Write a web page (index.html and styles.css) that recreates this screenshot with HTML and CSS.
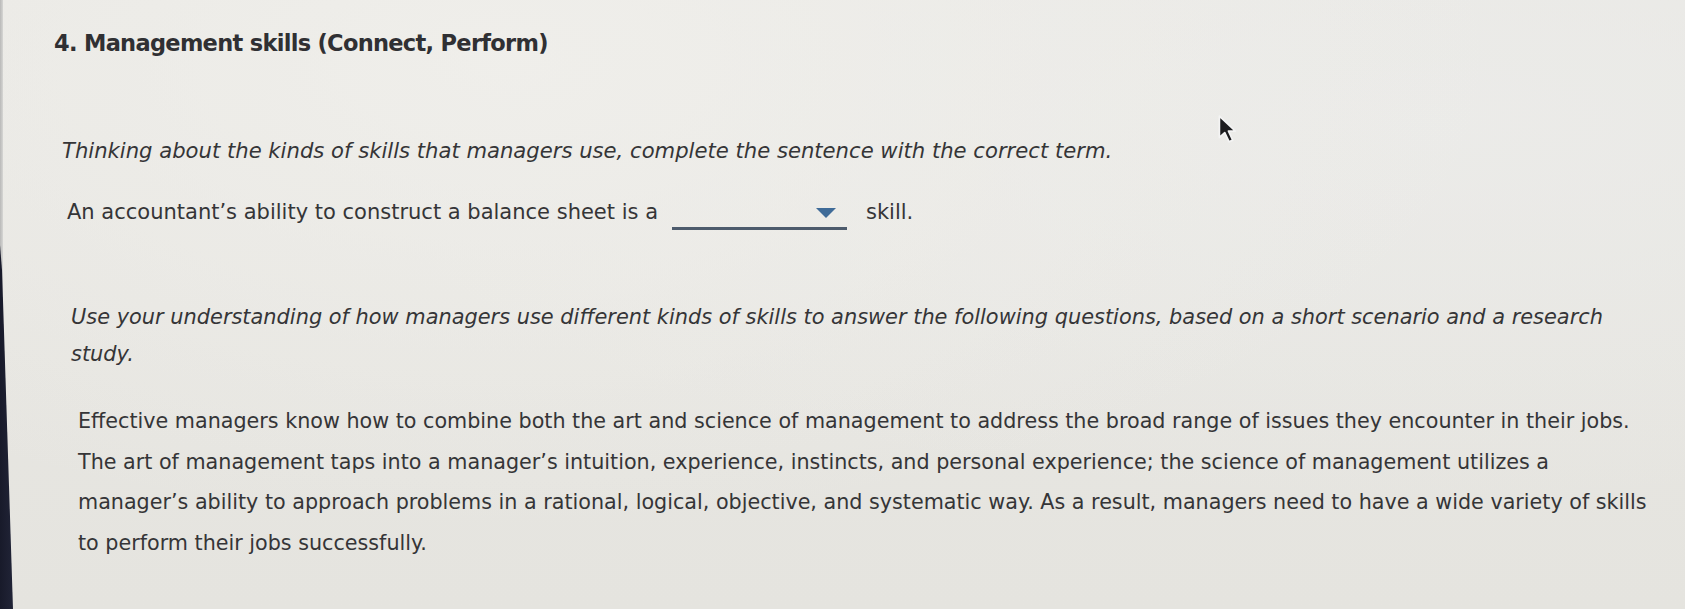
FILE: index.html
```
<!DOCTYPE html>
<html lang="en">
<head>
<meta charset="utf-8">
<title>Management skills</title>
<link rel="stylesheet" href="styles.css">
</head>
<body>
<div class="screen">
  <div class="edge-light"></div>
  <div class="edge"></div>
  <main class="content">
    <h1 class="title">4. Management skills (Connect, Perform)</h1>
    <p class="intro">Thinking about the kinds of skills that managers use, complete the sentence with the correct term.</p>
    <div class="question">
      <span class="q-text">An accountant’s ability to construct a balance sheet is a</span>
      <span class="select"><span class="caret"></span></span>
      <span class="q-end">skill.</span>
    </div>
    <p class="instructions">Use your understanding of how managers use different kinds of skills to answer the following questions, based on a short scenario and a research<br>study.</p>
    <p class="scenario">Effective managers know how to combine both the art and science of management to address the broad range of issues they encounter in their jobs.<br>The art of management taps into a manager’s intuition, experience, instincts, and personal experience; the science of management utilizes a<br>manager’s ability to approach problems in a rational, logical, objective, and systematic way. As a result, managers need to have a wide variety of skills<br>to perform their jobs successfully.</p>
  </main>
  <svg class="cursor" width="26" height="32" viewBox="0 0 24 30" aria-hidden="true">
    <path d="M3 2 L3 22 L8 17.5 L12 26 L15.5 24.5 L11.5 16 L18 16 Z" fill="#1c1c1e" stroke="#f4f4f4" stroke-width="1.6" stroke-linejoin="round"/>
  </svg>
</div>
</body>
</html>
```
FILE: styles.css
```
html, body {
  margin: 0;
  padding: 0;
}
body {
  width: 1685px;
  height: 609px;
  overflow: hidden;
  background: #e7e6e2;
}
.screen {
  position: relative;
  width: 1685px;
  height: 609px;
  background:
    radial-gradient(ellipse at 30% 10%, rgba(240,239,235,0.9), rgba(240,239,235,0) 60%),
    radial-gradient(ellipse at 85% 20%, rgba(236,236,234,0.8), rgba(236,236,234,0) 55%),
    linear-gradient(180deg, #e9e8e4 0%, #e5e4df 100%);
  font-family: "DejaVu Sans", Verdana, sans-serif;
  color: #353537;
  overflow: hidden;
}
.edge-light {
  position: absolute;
  left: 0;
  top: 0;
  width: 3px;
  height: 609px;
  background: linear-gradient(90deg, #b9b9b8, #d6d6d4);
}
.edge {
  position: absolute;
  left: 0;
  top: 0;
  width: 16px;
  height: 609px;
  background: linear-gradient(90deg, #181a2a 0%, #23263a 100%);
  clip-path: polygon(0 245px, 2px 270px, 13px 609px, 0 609px);
}
.content {
  display: flex;
  flex-direction: column;
  padding-top: 31px;
}
.title {
  margin: 0;
  padding-left: 54px;
  font-size: 22.5px;
  letter-spacing: -0.7px;
  line-height: 24px;
  font-weight: bold;
  color: #303033;
}
.intro {
  margin: 84px 0 0;
  padding-left: 62px;
  font-size: 21.15px;
  line-height: 24px;
  font-style: italic;
}
.question {
  margin-top: 34px;
  padding-left: 67px;
  height: 30px;
  display: flex;
  align-items: center;
  font-size: 21px;
}
.select {
  position: relative;
  width: 175px;
  height: 30px;
  margin-left: 14px;
  box-sizing: border-box;
  border-bottom: 3px solid #4d5b6c;
  top: 3px;
}
.caret {
  position: absolute;
  right: 11px;
  top: 8px;
  width: 0;
  height: 0;
  border-left: 10px solid transparent;
  border-right: 10px solid transparent;
  border-top: 10px solid #3f6b98;
}
.q-end {
  margin-left: 19px;
}
.instructions {
  margin: 72px 0 0;
  padding-left: 71px;
  font-size: 20.9px;
  line-height: 37px;
  font-style: italic;
  white-space: nowrap;
}
.scenario {
  margin: 28px 0 0;
  padding-left: 78px;
  font-size: 20.7px;
  line-height: 40.5px;
  white-space: nowrap;
}
.cursor {
  position: absolute;
  left: 1216px;
  top: 114px;
}
```
